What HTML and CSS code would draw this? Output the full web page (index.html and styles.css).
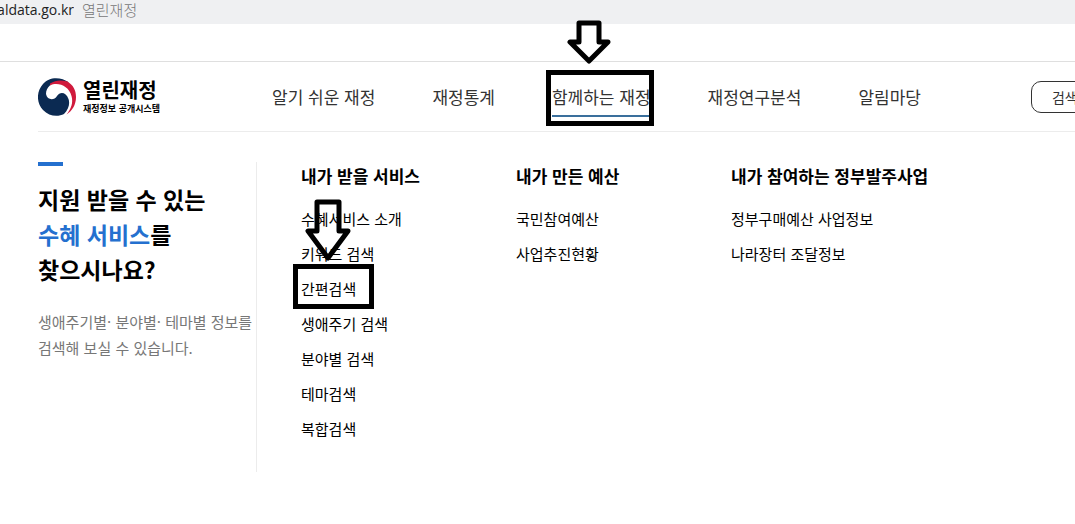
FILE: index.html
```html
<!DOCTYPE html>
<html lang="ko">
<head>
    <meta charset="UTF-8">
    <meta name="viewport" content="width=device-width, initial-scale=1.0">
    <title>열린재정</title>
    <link rel="stylesheet" href="styles.css">
</head>
<body>

<div class="address-bar">
    <div class="address-host"><span>caldata.go.kr</span></div>
    <span class="address-title">열린재정</span>
</div>
<div class="top-bar"></div>

<header class="header">
    <a class="logo" href="#">
        <svg class="logo-mark" viewBox="0 0 38 38" aria-hidden="true">
            <path d="M31 4.500 C23 -1.500 11 -1.500 5 6 C-2 14 -1.500 25 5 32 C11 38.500 20 39 26 36 C31 31 32 25 30.500 21 C28 14 22 13.500 19 18 C16 23 9 22 8 16 C8 9 14 4 21 4 Z" fill="#0b2a52"/>
            <path d="M12 5.500 C18 1.500 24 2 29.500 3.500 C35 7 38 12 38 19 C38 27 34 33 28.500 36.500 C33 31 35.500 25 33.500 18 C31 8 20 3.500 12 7.500 Z" fill="#d01a3c"/>
        </svg>
        <span class="logo-text">
            <strong>열린재정</strong>
            <small>재정정보 공개시스템</small>
        </span>
    </a>
    <nav class="nav">
        <a href="#">알기 쉬운 재정</a>
        <a href="#">재정통계</a>
        <a href="#" class="active">함께하는 재정
            <svg class="arrow arrow-nav" viewBox="0 0 44 44" aria-hidden="true">
                <path d="M12 3 H32 V22 H41 L22 41 L3 22 H12 Z"/>
            </svg>
            <span class="mark mark-nav"></span>
        </a>
        <a href="#">재정연구분석</a>
        <a href="#">알림마당</a>
    </nav>
    <button type="button" class="search-button">검색</button>
</header>

<main class="menu">
    <section class="intro">
        <h1>지원 받을 수 있는<br><em>수혜 서비스</em>를<br>찾으시나요?</h1>
        <p>생애주기별· 분야별· 테마별 정보를<br>검색해 보실 수 있습니다.</p>
    </section>
    <div class="columns">
        <section>
            <h2>내가 받을 서비스</h2>
            <ul>
                <li><a href="#">수혜서비스 소개</a></li>
                <li><a href="#">키워드 검색</a></li>
                <li><a href="#">간편검색
                    <svg class="arrow arrow-list" viewBox="0 0 46 62" aria-hidden="true">
                        <path d="M12 3 H34 V32 H43 L23 59 L3 32 H12 Z"/>
                    </svg>
                    <span class="mark mark-list"></span>
                </a></li>
                <li><a href="#">생애주기 검색</a></li>
                <li><a href="#">분야별 검색</a></li>
                <li><a href="#">테마검색</a></li>
                <li><a href="#">복합검색</a></li>
            </ul>
        </section>
        <section>
            <h2>내가 만든 예산</h2>
            <ul>
                <li><a href="#">국민참여예산</a></li>
                <li><a href="#">사업추진현황</a></li>
            </ul>
        </section>
        <section>
            <h2>내가 참여하는 정부발주사업</h2>
            <ul>
                <li><a href="#">정부구매예산 사업정보</a></li>
                <li><a href="#">나라장터 조달정보</a></li>
            </ul>
        </section>
    </div>
</main>

</body>
</html>
```
FILE: styles.css
```css
* {
    box-sizing: border-box;
}
body {
    margin: 0;
    background: #fff;
    color: #000;
    font-family: "Noto Sans CJK KR", sans-serif;
    font-size: 15px;
    overflow-x: hidden;
}
a {
    color: inherit;
    text-decoration: none;
}
h1, h2, p, ul {
    margin: 0;
    padding: 0;
}
ul {
    list-style: none;
}

/* browser address strip */
.address-bar {
    display: flex;
    gap: 8px;
    height: 24px;
    background: #eff0f2;
    line-height: 20px;
    overflow: hidden;
}
.address-host {
    display: flex;
    justify-content: flex-end;
    width: 74px;
    overflow: hidden;
    font-family: "Open Sans", sans-serif;
    font-size: 14px;
    color: #222;
}
.address-title {
    font-weight: 300;
    color: #777;
}
.top-bar {
    height: 38px;
    border-bottom: 1px solid #dfdfdf;
}

/* header */
.header {
    display: flex;
    align-items: center;
    height: 70px;
    margin-left: 38px;
    border-bottom: 1px solid #ececec;
}
.logo {
    display: flex;
    flex: none;
    align-items: center;
    gap: 7px;
    width: 234px;
}
.logo-mark {
    width: 38px;
    height: 38px;
}
.logo-text {
    display: flex;
    flex-direction: column;
}
.logo-text strong {
    font-size: 20px;
    line-height: 24px;
}
.logo-text small {
    font-size: 9px;
    font-weight: 700;
    line-height: 14px;
}
.nav {
    display: flex;
    flex: none;
    gap: 57px;
}
.nav a {
    position: relative;
    border: solid transparent;
    border-width: 2px 0;
    font-size: 17px;
    line-height: 36px;
    color: #333;
}
.nav a.active {
    border-bottom-color: #3a6f9c;
}
.search-button {
    flex: none;
    height: 32px;
    margin-left: 110px;
    padding: 0 20px;
    border: 1px solid #333;
    border-radius: 10px;
    background: #fff;
    color: #333;
    font-family: inherit;
    font-size: 14px;
}

/* open menu panel */
.menu {
    display: flex;
    padding: 30px 0 40px 38px;
}
.intro {
    flex: none;
    width: 219px;
    min-height: 310px;
    border-right: 1px solid #ececec;
    white-space: nowrap;
}
.intro::before {
    content: "";
    display: block;
    width: 25px;
    height: 4px;
    background: #2470cf;
}
.intro h1 {
    margin-top: 16px;
    font-size: 23px;
    line-height: 35px;
}
.intro em {
    font-style: normal;
    color: #2470cf;
}
.intro p {
    margin-top: 22px;
    line-height: 26px;
    color: #777;
}
.columns {
    display: grid;
    flex: 1;
    grid-template-columns: 215px 215px 1fr;
    padding-left: 44px;
}
.columns h2 {
    margin-bottom: 11px;
    font-size: 17px;
    line-height: 28px;
}
.columns li {
    line-height: 35px;
}
.columns li a {
    position: relative;
    display: inline-block;
}

/* hand-drawn marks over the menu */
.mark {
    position: absolute;
    border: 5px solid #000;
}
.mark-nav {
    inset: -9px -3px -11px -6px;
}
.mark-list {
    inset: -7px -18px -3px -8px;
}
.arrow {
    position: absolute;
    fill: none;
    stroke: #000;
    stroke-width: 5px;
    stroke-linejoin: round;
}
.arrow-nav {
    top: -59px;
    left: 15px;
    width: 44px;
    height: 44px;
}
.arrow-list {
    top: -72px;
    left: 4px;
    width: 46px;
    height: 62px;
}
```
